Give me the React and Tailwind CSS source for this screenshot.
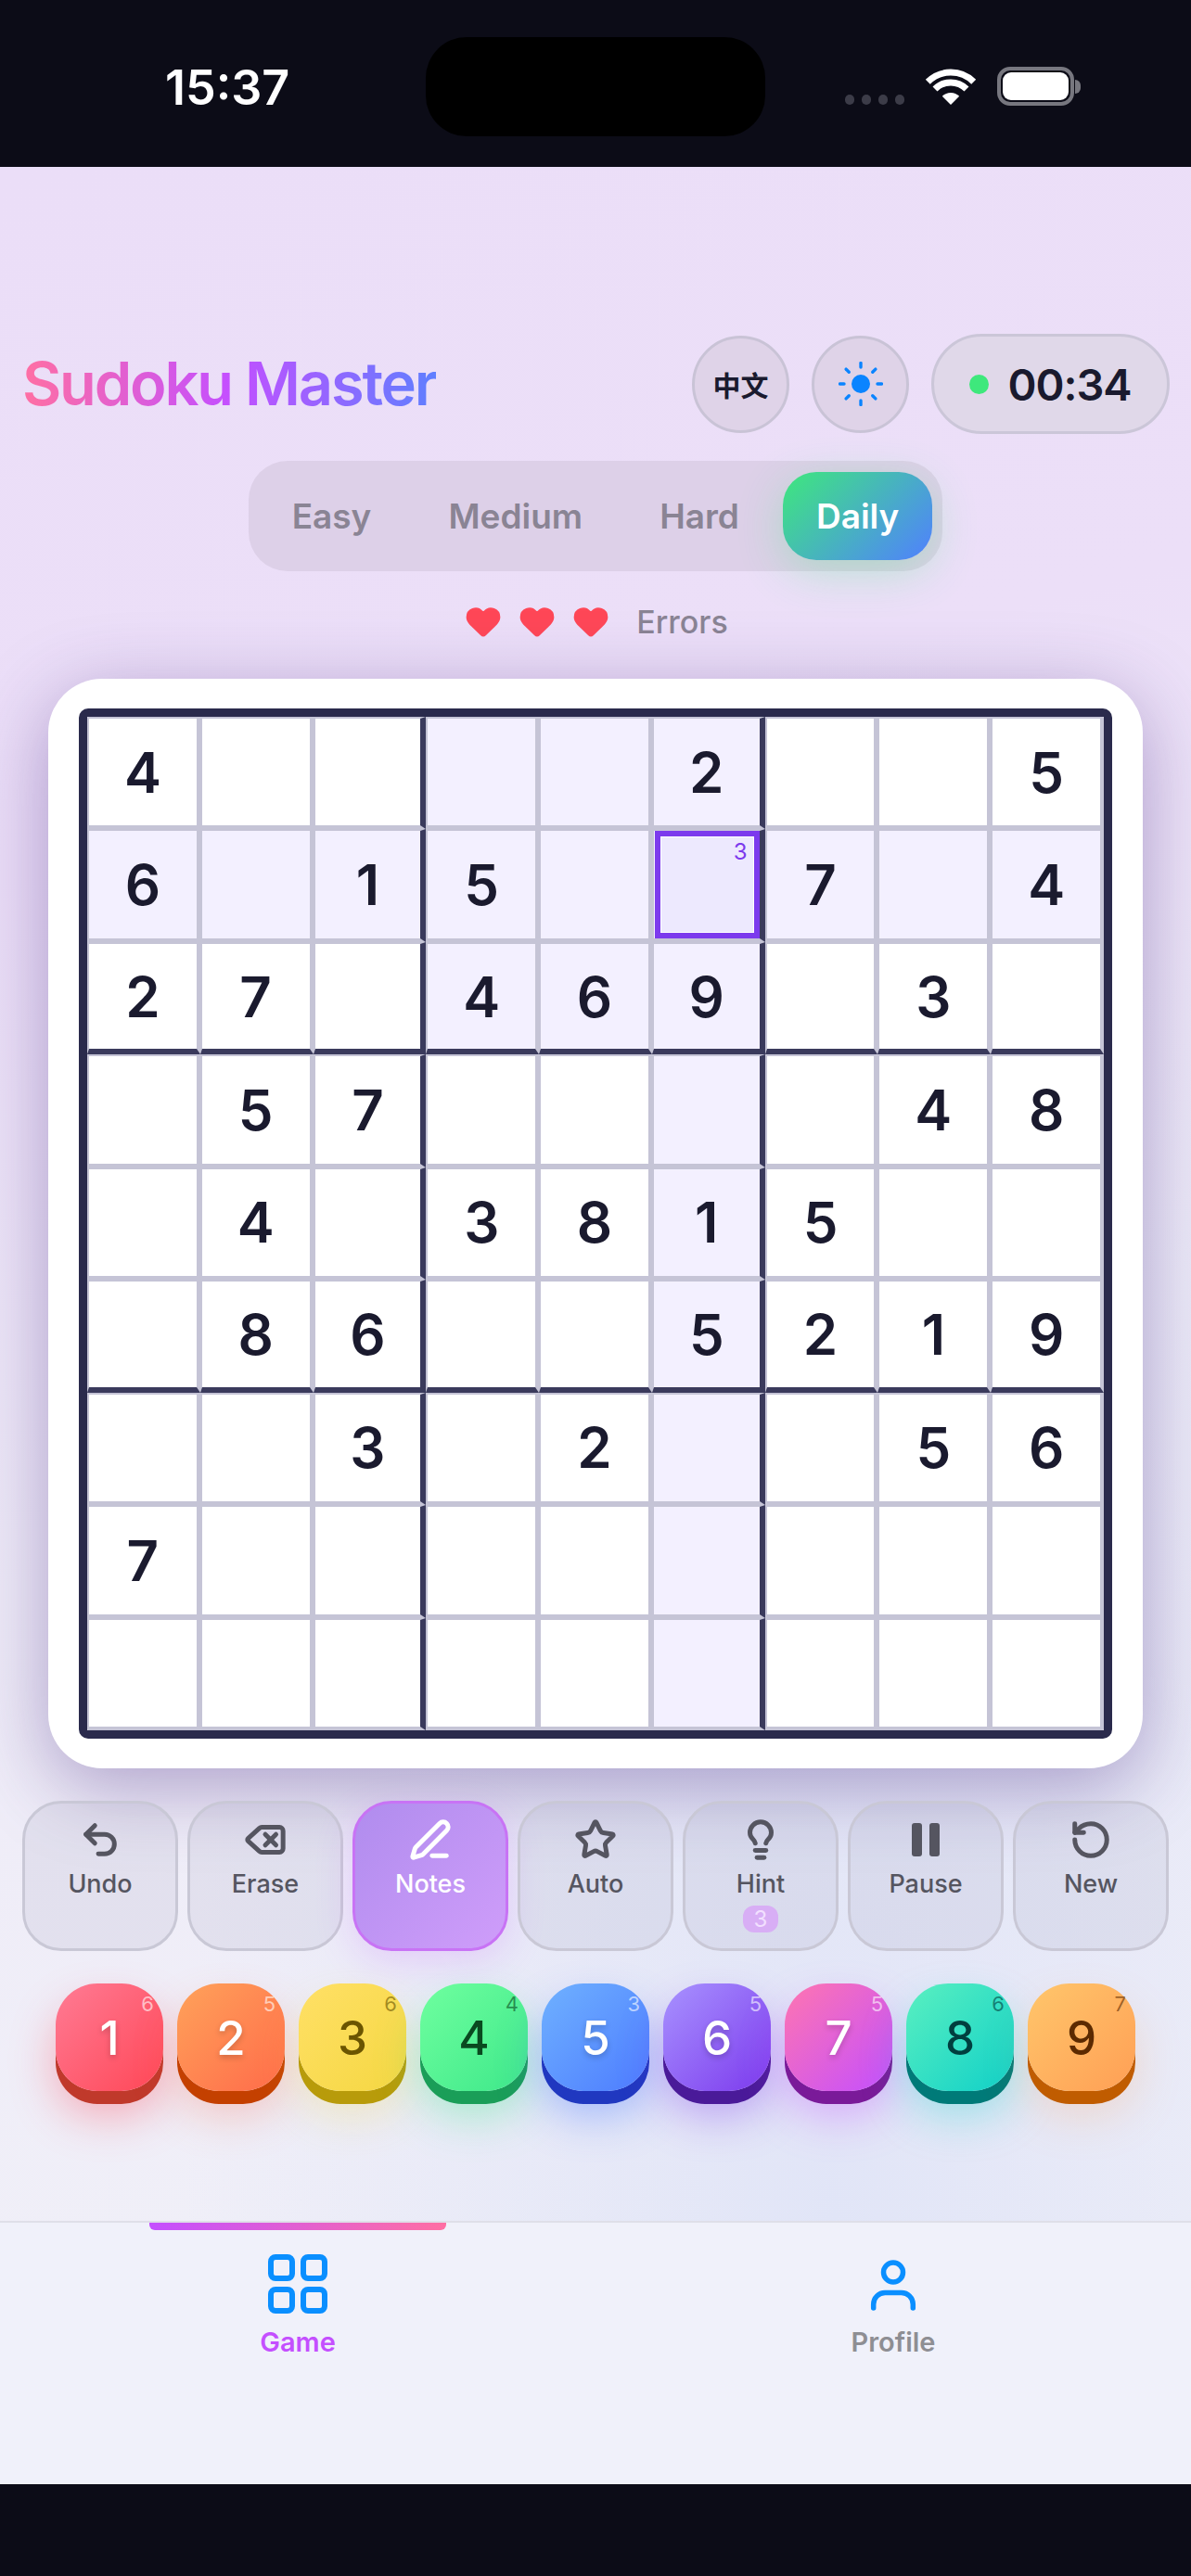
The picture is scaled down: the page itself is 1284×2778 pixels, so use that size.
import { Undo2, Delete, PenLine, Star, Lightbulb, RotateCcw, Heart } from "lucide-react";

const board = [
  "4....2..5",
  "6.15..7.4",
  "27.469.3.",
  ".57....48",
  ".4.3815..",
  ".86..5219",
  "..3.2..56",
  "7........",
  ".........",
];

const tabs = ["Easy", "Medium", "Hard"];

const whiteText = "text-white [text-shadow:0_3px_6px_rgba(0,0,0,0.2)]";

const tiles = [
  { n: 1, count: 6, face: "bg-[linear-gradient(135deg,#ff7b94,#ff4757)]", shadow: "shadow-[0_14px_0_#c0392b,0_26px_48px_rgba(255,71,87,0.4)]", text: whiteText, sub: "text-white/60" },
  { n: 2, count: 5, face: "bg-[linear-gradient(135deg,#ffa25a,#ff6b4a)]", shadow: "shadow-[0_14px_0_#c44000,0_26px_48px_rgba(255,107,74,0.3)]", text: whiteText, sub: "text-white/60" },
  { n: 3, count: 6, face: "bg-[linear-gradient(135deg,#ffe066,#f5d742)]", shadow: "shadow-[0_14px_0_#b89b0a,0_26px_48px_rgba(245,215,66,0.3)]", text: "text-[#6b5500]", sub: "text-[#6b5500]/60" },
  { n: 4, count: 4, face: "bg-[linear-gradient(135deg,#6fff9f,#3ee88a)]", shadow: "shadow-[0_14px_0_#1a9e58,0_26px_48px_rgba(62,232,138,0.4)]", text: "text-[#0a4a20]", sub: "text-[#0a4a20]/60" },
  { n: 5, count: 3, face: "bg-[linear-gradient(135deg,#6fb1ff,#4d7cff)]", shadow: "shadow-[0_14px_0_#2038c0,0_26px_48px_rgba(77,124,255,0.45)]", text: whiteText, sub: "text-white/60" },
  { n: 6, count: 5, face: "bg-[linear-gradient(135deg,#a892ff,#7c3aed)]", shadow: "shadow-[0_14px_0_#4a1a99,0_26px_48px_rgba(124,58,237,0.4)]", text: whiteText, sub: "text-white/60" },
  { n: 7, count: 5, face: "bg-[linear-gradient(135deg,#ff75b0,#c44fff)]", shadow: "shadow-[0_14px_0_#7a1a99,0_26px_48px_rgba(196,79,255,0.4)]", text: whiteText, sub: "text-white/60" },
  { n: 8, count: 6, face: "bg-[linear-gradient(135deg,#5af0c0,#10d0c8)]", shadow: "shadow-[0_14px_0_#007a78,0_26px_48px_rgba(16,208,200,0.35)]", text: "text-[#003f3f]", sub: "text-[#003f3f]/60" },
  { n: 9, count: 7, face: "bg-[linear-gradient(135deg,#ffc66b,#ff9f55)]", shadow: "shadow-[0_14px_0_#c05c00,0_26px_48px_rgba(255,159,85,0.25)]", text: "text-[#5c2a00]", sub: "text-[#5c2a00]/60" },
];

function PauseIcon() {
  return (
    <svg width="48" height="48" viewBox="0 0 48 48" fill="#555560">
      <rect x="9" y="6" width="11" height="36" rx="3" />
      <rect x="28" y="6" width="11" height="36" rx="3" />
    </svg>
  );
}

const actions = [
  { label: "Undo", icon: <Undo2 size={46} strokeWidth={2.6} /> },
  { label: "Erase", icon: <Delete size={46} strokeWidth={2.6} /> },
  { label: "Notes", icon: <PenLine size={46} strokeWidth={2.6} />, active: true },
  { label: "Auto", icon: <Star size={46} strokeWidth={2.6} /> },
  { label: "Hint", icon: <Lightbulb size={46} strokeWidth={2.6} />, badge: 3 },
  { label: "Pause", icon: <PauseIcon /> },
  { label: "New", icon: <RotateCcw size={46} strokeWidth={2.6} /> },
];

function Wifi() {
  return (
    <svg width="56" height="40" viewBox="0 0 56 40" fill="none" stroke="white" strokeWidth="7">
      <path d="M3.3 15.3A35 35 0 0 1 52.7 15.3" />
      <path d="M11 23A24 24 0 0 1 45 23" />
      <path d="M28 40L18.8 30.8A13 13 0 0 1 37.2 30.8Z" fill="white" stroke="none" />
    </svg>
  );
}

function Sun() {
  const rays = [0, 45, 90, 135, 180, 225, 270, 315];
  return (
    <svg width="48" height="48" viewBox="0 0 48 48" fill="#0a84ff" stroke="#0a84ff">
      <circle cx="24" cy="24" r="10" stroke="none" />
      {rays.map((deg) => (
        <line key={deg} x1="24" y1="6" x2="24" y2="1.5" strokeWidth="3.4" strokeLinecap="round" transform={`rotate(${deg} 24 24)`} />
      ))}
    </svg>
  );
}

function GridIcon() {
  return (
    <svg width="64" height="64" viewBox="0 0 64 64" fill="none" stroke="#0a8fff" strokeWidth="6">
      <rect x="3" y="3" width="23" height="23" rx="5" />
      <rect x="38" y="3" width="23" height="23" rx="5" />
      <rect x="3" y="38" width="23" height="23" rx="5" />
      <rect x="38" y="38" width="23" height="23" rx="5" />
    </svg>
  );
}

function UserIcon() {
  return (
    <svg width="64" height="64" viewBox="0 0 64 64" fill="none" stroke="#0a8fff" strokeWidth="5.5" strokeLinecap="round">
      <circle cx="32" cy="19.5" r="10.5" />
      <path d="M10.7 58V54A12.5 12.5 0 0 1 23.2 41.5H40.8A12.5 12.5 0 0 1 53.3 54V58" />
    </svg>
  );
}

function Cell({ value, r, c }) {
  const box = r < 3 && c >= 3 && c <= 5;
  const selected = r === 1 && c === 5;
  const lit = r === 1 || c === 5 || box;
  const thickRight = c === 2 || c === 5;
  const thickBottom = r === 2 || r === 5;
  return (
    <div
      className={`relative flex items-center justify-center border-t-2 border-l-2 border-t-[#c5c4d6] border-l-[#c5c4d6] text-[60px] font-semibold leading-none text-[#1a1a2e] ${
        thickRight ? "border-r-[6px] border-r-[#3a3a5c]" : "border-r-4 border-r-[#c5c4d6]"
      } ${thickBottom ? "border-b-[6px] border-b-[#3a3a5c]" : "border-b-4 border-b-[#c5c4d6]"} ${lit ? "bg-[#f3f0ff]" : "bg-white"}`}
    >
      {value !== "." && value}
      {selected && (
        <div className="absolute inset-y-0 right-0 left-[1px] border-[6px] border-[#7c3aed] bg-[#ede9fe] shadow-[inset_0_0_0_1px_white]">
          <span className="absolute right-[7px] top-[5px] text-[24px] font-normal leading-none text-[#7c3aed]">3</span>
        </div>
      )}
    </div>
  );
}

export default function App() {
  return (
    <div className="flex h-[2778px] w-[1284px] flex-col overflow-hidden bg-[#0c0c17] font-['Inter',sans-serif]">
      {/* status bar */}
      <div className="flex h-[180px] shrink-0 items-start bg-[#0c0c17] text-white">
        <div className="w-[178px]" />
        <div className="mt-[65px] w-[281px] text-[52px] font-semibold leading-[60px]">15:37</div>
        <div className="mt-[40px] h-[107px] w-[366px] rounded-[44px] bg-black" />
        <div className="ml-[86px] mt-[102px] flex gap-[8px]">
          {[0, 1, 2, 3].map((i) => (
            <div key={i} className="h-[11px] w-[10px] rounded-full bg-[#3c3c48]" />
          ))}
        </div>
        <div className="ml-[22px] mt-[73px]">
          <Wifi />
        </div>
        <div className="ml-[22px] mt-[72px] flex items-center">
          <div className="h-[42px] w-[83px] rounded-[14px] border-[4px] border-[#77777f] p-[2px]">
            <div className="h-full w-full rounded-[9px] bg-white" />
          </div>
          <div className="ml-[1px] h-[15px] w-[6px] rounded-r-full bg-[#77777f]" />
        </div>
      </div>

      {/* main */}
      <div className="flex flex-1 flex-col bg-[radial-gradient(ellipse_at_70%_100%,#e1e5f7_0%,rgba(225,229,247,0)_55%),linear-gradient(165deg,#ebdef8_0%,#ecdff8_30%,#efecf8_60%,#f0f0f8_100%)] pt-[180px]">
        <div className="flex h-[108px] items-center justify-between pl-[24px] pr-[23px]">
          <h1 className="whitespace-nowrap bg-[linear-gradient(90deg,#ff6fa3_0%,#c44fff_50%,#5f7fff_100%)] bg-clip-text text-[65px] font-semibold leading-[80px] tracking-[-2.2px] text-transparent">
            Sudoku Master
          </h1>
          <div className="flex items-center gap-[24px]">
            <button className="flex h-[105px] w-[105px] items-center justify-center rounded-full border-[3px] border-[#c9c3d6] bg-[#dfd3e8] font-['Noto_Sans_CJK_SC',sans-serif] text-[30px] font-bold text-[#1a1a2e]">
              中文
            </button>
            <button className="flex h-[105px] w-[105px] items-center justify-center rounded-full border-[3px] border-[#c9c3d6] bg-[#dfd3e8]">
              <Sun />
            </button>
            <div className="flex h-[108px] w-[257px] items-center justify-center gap-[20px] rounded-full border-[3px] border-[#cbc6d8] bg-[#e0d8e9]">
              <div className="h-[21px] w-[21px] rounded-full bg-[#3ee87c]" />
              <span className="text-[47px] font-semibold leading-none tracking-[-1px] text-[#1a1a2e]">00:34</span>
            </div>
          </div>
        </div>

        <div className="mt-[29px] flex justify-center">
          <div className="flex h-[119px] gap-[11px] rounded-[42px] bg-[#ddd0e8] px-[11px] py-[12px] text-[37px] font-semibold text-[#8a8494]">
            {tabs.map((t) => (
              <div key={t} className="flex items-center px-[36px]">{t}</div>
            ))}
            <div className="flex items-center rounded-[36px] bg-[linear-gradient(135deg,#3ee87c,#5080ff)] px-[36px] text-white shadow-[0_12px_48px_rgba(62,232,124,0.3)]">
              Daily
            </div>
          </div>
        </div>

        <div className="mt-[32px] flex h-[44px] items-center justify-center">
          <div className="flex gap-[14px]">
            {[0, 1, 2].map((i) => (
              <Heart key={i} size={44} fill="#ff4757" stroke="none" />
            ))}
          </div>
          <span className="ml-[27px] text-[34px] font-medium text-[#8a8494]">Errors</span>
        </div>

        {/* board */}
        <div className="mx-[52px] mt-[40px] rounded-[58px] bg-white px-[33px] py-[32px] shadow-[0_20px_84px_rgba(70,40,130,0.4)]">
          <div className="grid h-[1111px] grid-cols-9 grid-rows-9 overflow-hidden rounded-[10px] border-[9px] border-[#2a2a4c]">
            {board.map((row, r) =>
              row.split("").map((v, c) => <Cell key={`${r}-${c}`} value={v} r={r} c={c} />)
            )}
          </div>
        </div>

        {/* tool buttons */}
        <div className="mt-[35px] flex gap-[10px] px-[24px]">
          {actions.map((a) => (
            <button
              key={a.label}
              className={`flex h-[162px] w-[168px] flex-col items-center rounded-[42px] border-[3px] pt-[15px] text-[27px] font-medium leading-[36px] ${
                a.active
                  ? "border-[#c873f5] bg-[linear-gradient(135deg,#b08cee,#cf9dfa)] text-white shadow-[0_10px_40px_rgba(196,79,255,0.2)]"
                  : "border-[#c9c8d6] bg-[#9a98b8]/15 text-[#555560]"
              }`}
            >
              <div className="flex h-[48px] items-center justify-center">{a.icon}</div>
              <span className="mt-[6px]">{a.label}</span>
              {a.badge && (
                <span className="mt-[5px] flex h-[29px] w-[38px] items-center justify-center rounded-[12px] bg-[#d8aef5] text-[24px] font-normal leading-none text-[#f2e0ff]">
                  {a.badge}
                </span>
              )}
            </button>
          ))}
        </div>

        {/* number pad */}
        <div className="mt-[35px] flex justify-center gap-[15px]">
          {tiles.map((t) => (
            <button
              key={t.n}
              className={`relative flex h-[116px] w-[116px] items-center justify-center rounded-[45px] text-[51px] font-medium leading-none ${t.face} ${t.shadow} ${t.text}`}
            >
              {t.n}
              <span className={`absolute right-[10px] top-[11px] text-[22px] font-normal leading-none [text-shadow:none] ${t.sub}`}>
                {t.count}
              </span>
            </button>
          ))}
        </div>
        <div className="flex-1" />
      </div>

      {/* tab bar */}
      <div className="relative flex h-[284px] shrink-0 border-t-2 border-[#dfdfe8] bg-[#f0f1fa] pt-[34px] text-[29px] font-semibold leading-[36px]">
        <div className="absolute left-[161px] top-0 h-[8px] w-[320px] rounded-b-[6px] bg-[linear-gradient(90deg,#c44fff,#ff6fa3)]" />
        <div className="flex flex-1 flex-col items-center text-[#c44fff]">
          <GridIcon />
          <span className="mt-[13px]">Game</span>
        </div>
        <div className="flex flex-1 flex-col items-center text-[#8e8e93]">
          <UserIcon />
          <span className="mt-[13px]">Profile</span>
        </div>
      </div>
      <div className="h-[99px] shrink-0 bg-[#0c0c17]" />
    </div>
  );
}
